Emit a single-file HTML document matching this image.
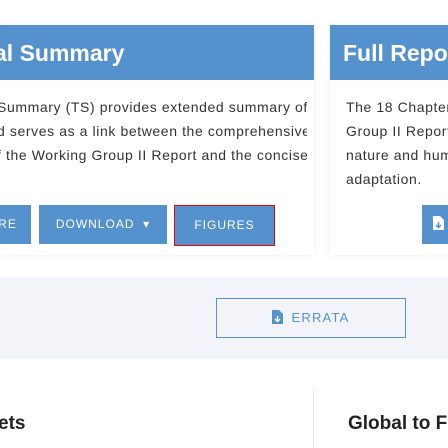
<!DOCTYPE html><html><head><style>
body{margin:0;width:448px;height:448px;overflow:hidden;background:#fff;font-family:"Liberation Sans",sans-serif;position:relative}
.a{position:absolute}
.card{background:#fff;box-shadow:0 0 6px rgba(0,0,0,.08)}
.hd{background:#5591cc;color:#fff;font-weight:bold;font-size:23px;height:55px;line-height:56px;white-space:nowrap;overflow:hidden}
.tx{font-size:14px;letter-spacing:0.6px;color:#333;line-height:24px;white-space:nowrap}
.btn{background:#5591cc;color:#fff;font-size:12px;letter-spacing:1px;height:39px;line-height:39px;text-align:center;top:205px}
</style></head><body>
<div class="a card" style="left:0;top:25px;width:314px;height:230px"></div>
<div class="a hd" style="left:0;top:25px;width:314px;text-indent:-6px">al Summary</div>
<div class="a tx" style="left:-3px;top:95px;width:310px;overflow:hidden">Summary (TS) provides extended summary of<br>d serves as a link between the comprehensive<br>f the Working Group II Report and the concise</div>
<div class="a btn" style="left:0;width:31px;overflow:hidden;text-indent:-16px">RE</div>
<div class="a btn" style="left:39px;width:128px">DOWNLOAD &nbsp;▾</div>
<div class="a btn" style="left:174px;width:99px;border:1px solid #e00;height:39px">FIGURES</div>
<div class="a card" style="left:330px;top:25px;width:130px;height:230px"></div>
<div class="a hd" style="left:330px;top:25px;width:130px;text-indent:13px">Full Repo</div>
<div class="a tx" style="left:346px;top:95px">The 18 Chapters<br>Group II Report a<br>nature and huma<br>adaptation.</div>
<div class="a btn" style="left:422px;width:30px;text-align:left"><svg width="11" height="14" viewBox="0 0 11 14" style="margin-left:11px;vertical-align:-2px"><path d="M0 0h7l4 4v10H0z" fill="#fff"/><path d="M5.5 6v5M3 9l2.5 2.5L8 9" stroke="#5591cc" stroke-width="1.5" fill="none"/></svg></div>
<div class="a" style="left:0;top:277px;width:448px;height:82px;background:#f3f4f9"></div>
<div class="a" style="left:216px;top:298px;width:188px;height:38px;border:1px solid #5591cc;color:#5591cc;font-size:13px;letter-spacing:1.2px;line-height:38px;text-align:center">
<svg width="11" height="14" viewBox="0 0 11 14" style="vertical-align:-2px;margin-right:8px"><path d="M0 0h7l4 4v10H0z" fill="#5591cc"/><path d="M5.5 6v5M3 9l2.5 2.5L8 9" stroke="#fff" stroke-width="1.5" fill="none"/></svg>ERRATA</div>
<div class="a" style="left:-2px;top:413px;font-size:19px;font-weight:bold;color:#222">ets</div>
<div class="a" style="left:313px;top:390px;width:1px;height:58px;background:#e5e5e5"></div>
<div class="a" style="left:348px;top:413px;font-size:19px;font-weight:bold;color:#222;white-space:nowrap">Global to F</div>
</body></html>
